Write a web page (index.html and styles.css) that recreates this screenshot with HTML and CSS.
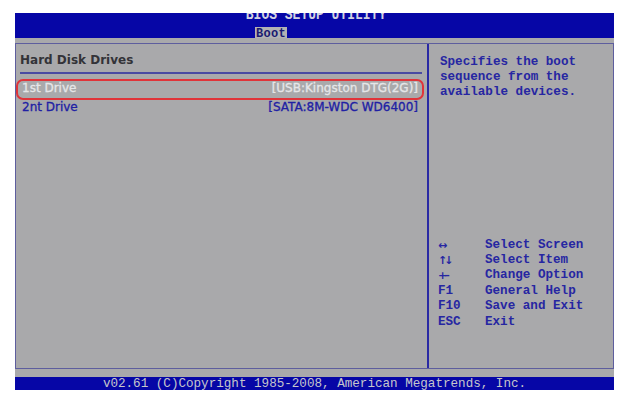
FILE: index.html
```html
<!DOCTYPE html>
<html>
<head>
<meta charset="utf-8">
<link rel="stylesheet" href="styles.css">
</head>
<body>
<div class="screen">
  <div class="topbar">
    <div class="title">BIOS SETUP UTILITY</div>
    <div class="tabs"><span class="tab">Boot</span></div>
  </div>
  <div class="panel">
    <div class="main">
      <div class="heading">Hard Disk Drives</div>
      <div class="row selected"><span>1st Drive</span><span>[USB:Kingston DTG(2G)]</span></div>
      <div class="row"><span>2nt Drive</span><span>[SATA:8M-WDC WD6400]</span></div>
    </div>
    <div class="side">
      <p class="help">Specifies the boot<br>sequence from the<br>available devices.</p>
      <div class="keys">
        <div class="key"><span class="k arrows">&#8596;</span><span>Select Screen</span></div>
        <div class="key"><span class="k arrows">&#8593;&#8595;</span><span>Select Item</span></div>
        <div class="key"><span class="k arrows">+&#8211;</span><span>Change Option</span></div>
        <div class="key"><span class="k">F1</span><span>General Help</span></div>
        <div class="key"><span class="k">F10</span><span>Save and Exit</span></div>
        <div class="key"><span class="k">ESC</span><span>Exit</span></div>
      </div>
    </div>
  </div>
  <div class="footer">v02.61 (C)Copyright 1985-2008, American Megatrends, Inc.</div>
</div>
</body>
</html>
```

FILE: styles.css
```css
html, body {
  margin: 0;
  background: #ffffff;
}

.screen {
  margin: 13px 0 0 15px;
  width: 599px;
  height: 377px;
  background: #a9a9ab;
  display: flex;
  flex-direction: column;
}

.topbar {
  flex: none;
  height: 25px;
  background: #0606a6;
  overflow: hidden;
  display: flex;
  flex-direction: column;
}

.title {
  margin-top: -4px;
  height: 14px;
  line-height: 14px;
  padding-left: 3px;
  text-align: center;
  font: bold 13px "Liberation Mono", monospace;
  color: #d2d2e2;
  transform: scaleY(1.2);
  transform-origin: 50% 100%;
}

.tabs {
  margin-top: auto;
  padding-left: 240px;
  height: 11px;
  display: flex;
  align-items: flex-end;
}

.tab {
  display: block;
  height: 11px;
  line-height: 11px;
  padding: 0 1px;
  background: #b2b2b4;
  color: #1a1a70;
  font: bold 12px "Liberation Mono", monospace;
  letter-spacing: 0.3px;
}

.panel {
  flex: none;
  margin-top: 5px;
  height: 324px;
  border: 1px solid #5e5e9e;
  display: grid;
  grid-template-columns: 411px 1fr;
}

.main {
  padding-top: 8px;
  font-family: "DejaVu Sans", sans-serif;
  font-size: 12px;
}

.heading {
  margin: 0 5px 0 4px;
  line-height: 16px;
  padding-bottom: 4px;
  border-bottom: 2px solid #4a4aa2;
  font-weight: bold;
  color: #333338;
}

.row {
  display: flex;
  justify-content: space-between;
  margin-right: 3px;
  padding: 0 6px 2px 6px;
  line-height: 15px;
  color: #2020a4;
  -webkit-text-stroke: 0.3px currentColor;
}

.row.selected {
  margin-top: 5px;
  padding: 0 4px 2px 4px;
  border: 2px solid #e0343a;
  border-radius: 7px;
  color: #e6e6e8;
}

.side {
  border-left: 2px solid #2a2aa4;
  display: flex;
  flex-direction: column;
  padding: 11px 0 38px 0;
  font: bold 12.6px "Liberation Mono", monospace;
  color: #2626a2;
}

.help {
  margin: 0;
  padding-left: 11px;
  line-height: 15px;
}

.keys {
  margin-top: auto;
  padding-left: 9px;
  line-height: 15.4px;
}

.key {
  display: flex;
}

.k {
  width: 47px;
  flex: none;
}

.arrows {
  font-family: "DejaVu Sans", sans-serif;
  font-size: 11px;
  letter-spacing: -3px;
}

.footer {
  flex: none;
  margin-top: 8px;
  height: 13px;
  line-height: 13px;
  background: #0606a6;
  color: #c6c6cc;
  text-align: center;
  font: 12.6px "Liberation Mono", monospace;
}
```
